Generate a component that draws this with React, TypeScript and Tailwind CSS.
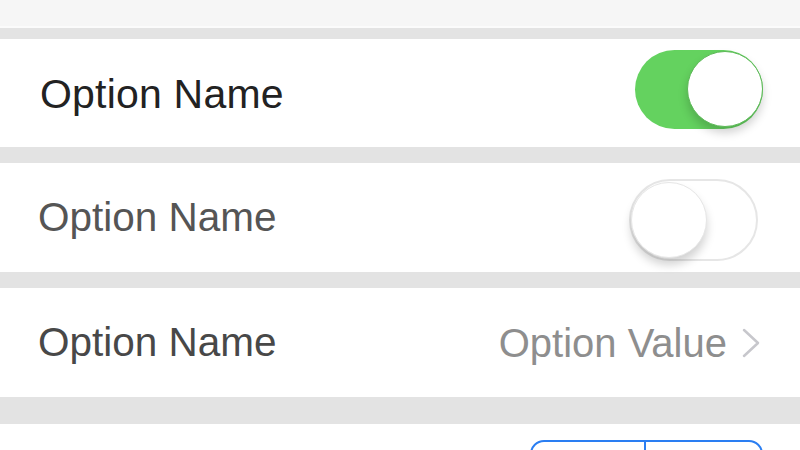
import { ReactNode } from "react";

function Row({ children, className = "" }: { children: ReactNode; className?: string }) {
  return <div className={`bg-white flex items-center justify-between ${className}`}>{children}</div>;
}

function Toggle({ on }: { on: boolean }) {
  if (on) {
    return (
      <div className="w-[128px] h-[79px] rounded-full bg-[#64d25f] flex items-center justify-end">
        <div className="w-[76px] h-[76px] rounded-full bg-white border border-[#5cb957] shadow-[0_6px_10px_rgba(0,0,0,0.18)]" />
      </div>
    );
  }
  return (
    <div className="w-[129px] h-[82px] rounded-full bg-white border-2 border-[#e6e6e6] flex items-center">
      <div className="w-[76px] h-[76px] rounded-full bg-white border border-[#e6e6e6] shadow-[0_7px_10px_rgba(0,0,0,0.18)]" />
    </div>
  );
}

export default function App() {
  return (
    <div className="h-[450px] w-[800px] overflow-hidden bg-[#e3e3e3] font-['Liberation_Sans',Arial,sans-serif]">
      <div className="h-[26px] bg-[#f6f6f6]" />
      <div className="h-[2px] bg-[#fbfbfb]" />
      <div className="h-[11px]" />

      <Row className="h-[108px] pl-[40px] pr-[37px]">
        <span className="text-[41px] text-[#222] tracking-[0.2px] pt-[4px]">Option Name</span>
        <div className="mb-[8px]">
          <Toggle on />
        </div>
      </Row>

      <div className="h-[16px]" />

      <Row className="h-[109px] pl-[38px] pr-[42px]">
        <span className="text-[40.5px] text-[#555]">Option Name</span>
        <div className="mt-[4px]">
          <Toggle on={false} />
        </div>
      </Row>

      <div className="h-[16px]" />

      <Row className="h-[109px] pl-[38px] pr-[40px]">
        <span className="text-[40.5px] text-[#484848]">Option Name</span>
        <div className="flex items-center gap-[15px]">
          <span className="text-[40px] text-[#8e8e8e]">Option Value</span>
          <svg width="18" height="30" viewBox="0 0 18 30" fill="none">
            <polyline points="2,2 16,15 2,28" stroke="#c7c7cc" strokeWidth="2.5" strokeLinejoin="round" strokeLinecap="round" />
          </svg>
        </div>
      </Row>

      <div className="h-[27px]" />

      <div className="bg-white h-[60px] flex justify-end pr-[37px] pt-[16px]">
        <div className="w-[233px] h-[60px] rounded-[14px] border-2 border-[#2a7ef2] flex">
          <div className="w-[114px] border-r-2 border-[#2a7ef2]" />
          <div className="flex-1" />
        </div>
      </div>
    </div>
  );
}
